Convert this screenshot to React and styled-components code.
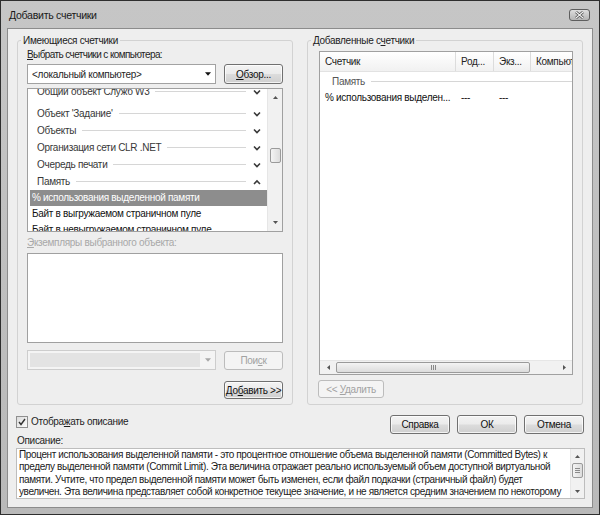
import styled, { createGlobalStyle } from 'styled-components'

const GlobalStyle = createGlobalStyle`
  html, body {
    margin: 0;
    padding: 0;
    background: #ffffff;
  }
  body {
    font-family: "Liberation Sans", Arial, sans-serif;
    font-size: 10px;
    letter-spacing: -0.3px;
    color: #1e1e1e;
  }
  * {
    box-sizing: border-box;
  }
`

const Window = styled.div`
  width: 600px;
  height: 515px;
  display: flex;
  flex-direction: column;
  background: linear-gradient(#c6c6c6, #b9b9b9);
  border: 1px solid #2e2e2e;
  padding: 0 6px 6px;
`
const TitleBar = styled.div`
  height: 27px;
  display: flex;
  justify-content: space-between;
  align-items: center;
  padding-left: 2px;
`
const Title = styled.span`
  font-size: 10.6px;
  color: #1a1a1a;
`
const CloseButton = styled.div`
  width: 21px;
  height: 12px;
  margin-right: 3px;
  align-self: flex-start;
  margin-top: 8px;
  border: 1px solid #5e5e5e;
  border-radius: 3px;
  background: linear-gradient(#dedede, #b4b4b4);
  display: flex;
  align-items: center;
  justify-content: center;
`
const Client = styled.div`
  flex: 1;
  background: #eeeeee;
  border: 1px solid #8c8c8c;
  padding: 5px 8px 0 9px;
  display: flex;
  flex-direction: column;
`
const Groups = styled.div`
  display: flex;
  gap: 14px;
`
const GroupBox = styled.fieldset`
  margin: 0;
  min-width: 0;
  width: 276px;
  height: 371px;
  border: 1px solid #d2d2d2;
  border-radius: 3px;
  padding: 0 9px;
  display: flex;
  flex-direction: column;
`
const Legend = styled.legend`
  padding: 0 2px;
  margin-left: -6px;
  line-height: 13px;
  color: #222;
`
const Label = styled.div`
  line-height: 13px;
  margin-top: ${p => p.$mt || 0}px;
  letter-spacing: ${p => p.$tight ? '-0.6px' : 'inherit'};
  color: ${p => (p.$disabled ? '#a8a8a8' : '#1e1e1e')};
`
const Row = styled.div`
  display: flex;
  justify-content: space-between;
  align-items: center;
  margin-top: ${p => p.$mt || 0}px;
`
const Combo = styled.div`
  width: 189px;
  height: 20px;
  display: flex;
  align-items: center;
  border: 1px solid ${p => (p.$disabled ? '#cdcdcd' : '#a2a2a2')};
  background: ${p => (p.$disabled ? '#f4f4f4' : '#ffffff')};
  padding: 0 4px 0 4px;
  gap: 5px;
`
const ComboText = styled.div`
  flex: 1;
  white-space: nowrap;
`
const ComboField = styled.div`
  flex: 1;
  height: 14px;
  background: #e3e3e3;
  margin-left: -2px;
`
const Button = styled.div`
  width: ${p => p.$w}px;
  height: ${p => p.$h || 19}px;
  border: 1px solid ${p => (p.$disabled ? '#bcbcbc' : '#707070')};
  border-radius: 3px;
  background: ${p =>
    p.$disabled
      ? '#f4f4f4'
      : 'linear-gradient(#f3f3f3 0%, #ebebeb 48%, #dcdcdc 52%, #cfcfcf 100%)'};
  box-shadow: ${p => (p.$disabled ? 'none' : 'inset 0 0 0 1px rgba(255,255,255,0.75)')};
  color: ${p => (p.$disabled ? '#a2a2a2' : '#111')};
  display: flex;
  align-items: center;
  justify-content: center;
  white-space: nowrap;
  margin-left: ${p => p.$ml || 0}px;
  margin-top: ${p => p.$mt || 0}px;
  align-self: ${p => p.$self || 'auto'};
`
const ListBox = styled.div`
  height: ${p => p.$h}px;
  margin-top: ${p => p.$mt || 0}px;
  border: 1px solid #a0a0a0;
  background: #ffffff;
  display: flex;
  overflow: hidden;
`
const ListArea = styled.div`
  flex: 1;
  overflow: hidden;
`
const ListScroll = styled.div`
  margin-top: ${p => p.$offset}px;
`
const CategoryRow = styled.div`
  height: 17px;
  display: flex;
  align-items: center;
  padding: 0 6px ${p => (p.$cut ? 10 : 0)}px 9px;
  color: #383838;
  white-space: nowrap;
`
const Rule = styled.div`
  flex: 1;
  height: 1px;
  background: #d6d6d6;
  margin: 0 7px 0 6px;
`
const ItemRow = styled.div`
  height: 16px;
  line-height: 16px;
  margin-left: 2px;
  padding-left: 2px;
  white-space: nowrap;
  background: ${p => (p.$selected ? '#8d8d8d' : 'transparent')};
  color: ${p => (p.$selected ? '#ffffff' : '#111')};
`
const VScroll = styled.div`
  width: ${p => p.$w || 15}px;
  background: #f1f1f1;
  border-left: 1px solid #e6e6e6;
  display: flex;
  flex-direction: column;
  align-items: center;
`
const ArrowBox = styled.div`
  width: ${p => p.$w || 'auto'};
  height: ${p => p.$h || 'auto'};
  display: flex;
  align-items: center;
  justify-content: center;
  flex: none;
`
const VTrack = styled.div`
  flex: 1;
  width: 100%;
  display: flex;
  flex-direction: column;
  align-items: center;
`
const VThumb = styled.div`
  width: 11px;
  height: 15px;
  margin-top: ${p => p.$top}px;
  border: 1px solid #9a9a9a;
  border-radius: 2px;
  background: linear-gradient(90deg, #f4f4f4, #dcdcdc);
  display: flex;
  flex-direction: column;
  align-items: center;
  justify-content: center;
  gap: 1px;
`
const GripLine = styled.div`
  width: 5px;
  height: 1px;
  background: #8a8a8a;
`
const ListView = styled.div`
  width: 254px;
  height: 324px;
  margin: 4px 0 0 2px;
  border: 1px solid #a0a0a0;
  background: #ffffff;
  display: flex;
  flex-direction: column;
  overflow: hidden;
`
const Grid = styled.div`
  display: grid;
  grid-template-columns: 136px 38px 37px 60px;
  height: ${p => p.$h}px;
  flex: none;
`
const HeaderGrid = styled(Grid)`
  background: linear-gradient(#ffffff, #f1f1f1);
  border-bottom: 1px solid #e2e2e2;
`
const HeaderCell = styled.div`
  padding-left: 5px;
  line-height: 19px;
  border-right: 1px solid #dcdcdc;
  white-space: nowrap;
  overflow: hidden;
  color: #222;
`
const Cell = styled.div`
  padding-left: 5px;
  line-height: 16px;
  white-space: nowrap;
  overflow: hidden;
  color: #111;
`
const GroupRow = styled.div`
  height: 17px;
  margin-top: 1px;
  display: flex;
  align-items: center;
  padding-left: 12px;
  color: #555;
  flex: none;
`
const GroupRule = styled.div`
  flex: 1;
  height: 1px;
  background: #d6d6d6;
  margin-left: 6px;
`
const Filler = styled.div`
  flex: 1;
`
const HScroll = styled.div`
  height: 14px;
  background: #f1f1f1;
  border-top: 1px solid #e6e6e6;
  display: flex;
  align-items: center;
  flex: none;
`
const HThumb = styled.div`
  width: 194px;
  height: 11px;
  border: 1px solid #9a9a9a;
  border-radius: 2px;
  background: linear-gradient(#f4f4f4, #dcdcdc);
  display: flex;
  align-items: center;
  justify-content: center;
  gap: 1px;
`
const GripBar = styled.div`
  width: 1px;
  height: 5px;
  background: #8a8a8a;
`
const BottomBar = styled.div`
  display: flex;
  justify-content: space-between;
  align-items: flex-start;
  margin-top: 10px;
`
const CheckLabel = styled.div`
  display: flex;
  align-items: center;
  gap: 3px;
  margin-top: 1px;
  margin-left: -1px;
  line-height: 12px;
`
const CheckBox = styled.div`
  width: 12px;
  height: 12px;
  border: 1px solid #8f8f8f;
  background: linear-gradient(135deg, #dcdcdc, #fbfbfb);
  display: flex;
  align-items: center;
  justify-content: center;
`
const Buttons = styled.div`
  display: flex;
  gap: 7px;
`
const DescBox = styled.div`
  width: 569px;
  height: 51px;
  margin: 1px 0 0 -1px;
  border: 1px solid #bdbdbd;
  background: #ffffff;
  display: flex;
`
const DescText = styled.div`
  flex: 1;
  padding: 0 0 0 2px;
  line-height: 12.3px;
  letter-spacing: -0.38px;
  white-space: nowrap;
  overflow: hidden;
  color: #1a1a1a;
`
const Key = styled.span`
  text-decoration: underline;
`

const Chevron = ({ up }) => (
  <svg width="8" height="6" viewBox="0 0 8 6">
    <polyline
      points={up ? '1,5 4,2 7,5' : '1,1.5 4,4.5 7,1.5'}
      fill="none"
      stroke="#3a3a3a"
      strokeWidth="1.6"
    />
  </svg>
)

const Tri = ({ dir, color = '#555', size = 5 }) => {
  const pts = {
    up: '0,4 2.5,1 5,4',
    down: '0,1 2.5,4 5,1',
    left: '4,0 1,2.5 4,5',
    right: '1,0 4,2.5 1,5',
  }[dir]
  return (
    <svg width={size} height={size} viewBox="0 0 5 5">
      <polygon points={pts} fill={color} />
    </svg>
  )
}

const categories = [
  "Объект 'Задание'",
  'Объекты',
  'Организация сети CLR .NET',
  'Очередь печати',
]

const counters = [
  '% использования выделенной памяти',
  'Байт в выгружаемом страничном пуле',
  'Байт в невыгружаемом страничном пуле',
]

const description = [
  'Процент использования выделенной памяти - это процентное отношение объема выделенной памяти (Committed Bytes) к',
  'пределу выделенной памяти (Commit Limit). Эта величина отражает реально используемый объем доступной виртуальной',
  'памяти. Учтите, что предел выделенной памяти может быть изменен, если файл подкачки (страничный файл) будет',
  'увеличен. Эта величина представляет собой конкретное текущее значение, и не является средним значением по некоторому',
]

export default function App() {
  return (
    <>
      <GlobalStyle />
      <Window>
        <TitleBar>
          <Title>Добавить счетчики</Title>
          <CloseButton>
            <svg width="11" height="8" viewBox="0 0 11 8">
              <path d="M2 1 L9 7 M9 1 L2 7" stroke="#4a4a4a" strokeWidth="2.6" />
              <path d="M2 1 L9 7 M9 1 L2 7" stroke="#f4f4f4" strokeWidth="1.1" />
            </svg>
          </CloseButton>
        </TitleBar>
        <Client>
          <Groups>
            <GroupBox>
              <Legend>Имеющиеся счетчики</Legend>
              <Label $mt={1} $tight>
                <Key>В</Key>ыбрать счетчики с компьютера:
              </Label>
              <Row $mt={3}>
                <Combo>
                  <ComboText>&lt;локальный компьютер&gt;</ComboText>
                  <Tri dir="down" color="#111" size={6} />
                </Combo>
                <Button $w={59} $h={20}>
                  <span>
                    <Key>О</Key>бзор...
                  </span>
                </Button>
              </Row>
              <ListBox $h={144} $mt={4}>
                <ListArea>
                  <ListScroll $offset={-1}>
                    <CategoryRow $cut>
                      Общий объект Служб W3
                      <Rule />
                      <Chevron />
                    </CategoryRow>
                    {categories.map(c => (
                      <CategoryRow key={c}>
                        {c}
                        <Rule />
                        <Chevron />
                      </CategoryRow>
                    ))}
                    <CategoryRow>
                      Память
                      <Rule />
                      <Chevron up />
                    </CategoryRow>
                    {counters.map((c, i) => (
                      <ItemRow key={c} $selected={i === 0}>
                        {c}
                      </ItemRow>
                    ))}
                  </ListScroll>
                </ListArea>
                <VScroll>
                  <ArrowBox $h="17px">
                    <Tri dir="up" />
                  </ArrowBox>
                  <VTrack>
                    <VThumb $top={42} />
                  </VTrack>
                  <ArrowBox $h="17px">
                    <Tri dir="down" />
                  </ArrowBox>
                </VScroll>
              </ListBox>
              <Label $mt={4} $disabled>
                <Key>Э</Key>кземпляры выбранного объекта:
              </Label>
              <ListBox $h={90} $mt={4} />
              <Row $mt={7}>
                <Combo $disabled>
                  <ComboField />
                  <Tri dir="down" color="#a8a8a8" size={6} />
                </Combo>
                <Button $w={59} $disabled>
                  <span>
                    Пои<Key>с</Key>к
                  </span>
                </Button>
              </Row>
              <Button $w={59} $h={18} $mt={11} $self="flex-end">
                <span>
                  До<Key>б</Key>авить &gt;&gt;
                </span>
              </Button>
            </GroupBox>
            <GroupBox>
              <Legend>
                Добавленные с<Key>ч</Key>етчики
              </Legend>
              <ListView>
                <HeaderGrid $h={20}>
                  <HeaderCell>Счетчик</HeaderCell>
                  <HeaderCell>Род...</HeaderCell>
                  <HeaderCell>Экз...</HeaderCell>
                  <HeaderCell>Компьютер</HeaderCell>
                </HeaderGrid>
                <GroupRow>
                  Память
                  <GroupRule />
                </GroupRow>
                <Grid $h={16}>
                  <Cell>% использования выделен...</Cell>
                  <Cell>---</Cell>
                  <Cell>---</Cell>
                  <Cell />
                </Grid>
                <Filler />
                <HScroll>
                  <ArrowBox $w="16px" $h="14px">
                    <Tri dir="left" />
                  </ArrowBox>
                  <HThumb>
                    <GripBar />
                    <GripBar />
                    <GripBar />
                  </HThumb>
                  <Filler />
                  <ArrowBox $w="16px" $h="14px">
                    <Tri dir="right" />
                  </ArrowBox>
                </HScroll>
              </ListView>
              <Button $w={66} $h={18} $mt={5} $ml={1} $disabled>
                <span>
                  &lt;&lt; <Key>У</Key>далить
                </span>
              </Button>
            </GroupBox>
          </Groups>
          <BottomBar>
            <CheckLabel>
              <CheckBox>
                <svg width="8" height="8" viewBox="0 0 8 8">
                  <polyline points="1,4 3,6.5 7,1" fill="none" stroke="#333" strokeWidth="1.4" />
                </svg>
              </CheckBox>
              <span>
                Отобра<Key>ж</Key>ать описание
              </span>
            </CheckLabel>
            <Buttons>
              <Button $w={60}>Справка</Button>
              <Button $w={60}>ОК</Button>
              <Button $w={60}>Отмена</Button>
            </Buttons>
          </BottomBar>
          <Label>Описание:</Label>
          <DescBox>
            <DescText>
              {description.map(l => (
                <div key={l}>{l}</div>
              ))}
            </DescText>
            <VScroll $w={14}>
              <ArrowBox $h="14px">
                <Tri dir="up" />
              </ArrowBox>
              <VTrack>
                <VThumb $top={0}>
                  <GripLine />
                  <GripLine />
                  <GripLine />
                </VThumb>
              </VTrack>
              <ArrowBox $h="14px">
                <Tri dir="down" />
              </ArrowBox>
            </VScroll>
          </DescBox>
        </Client>
      </Window>
    </>
  )
}
